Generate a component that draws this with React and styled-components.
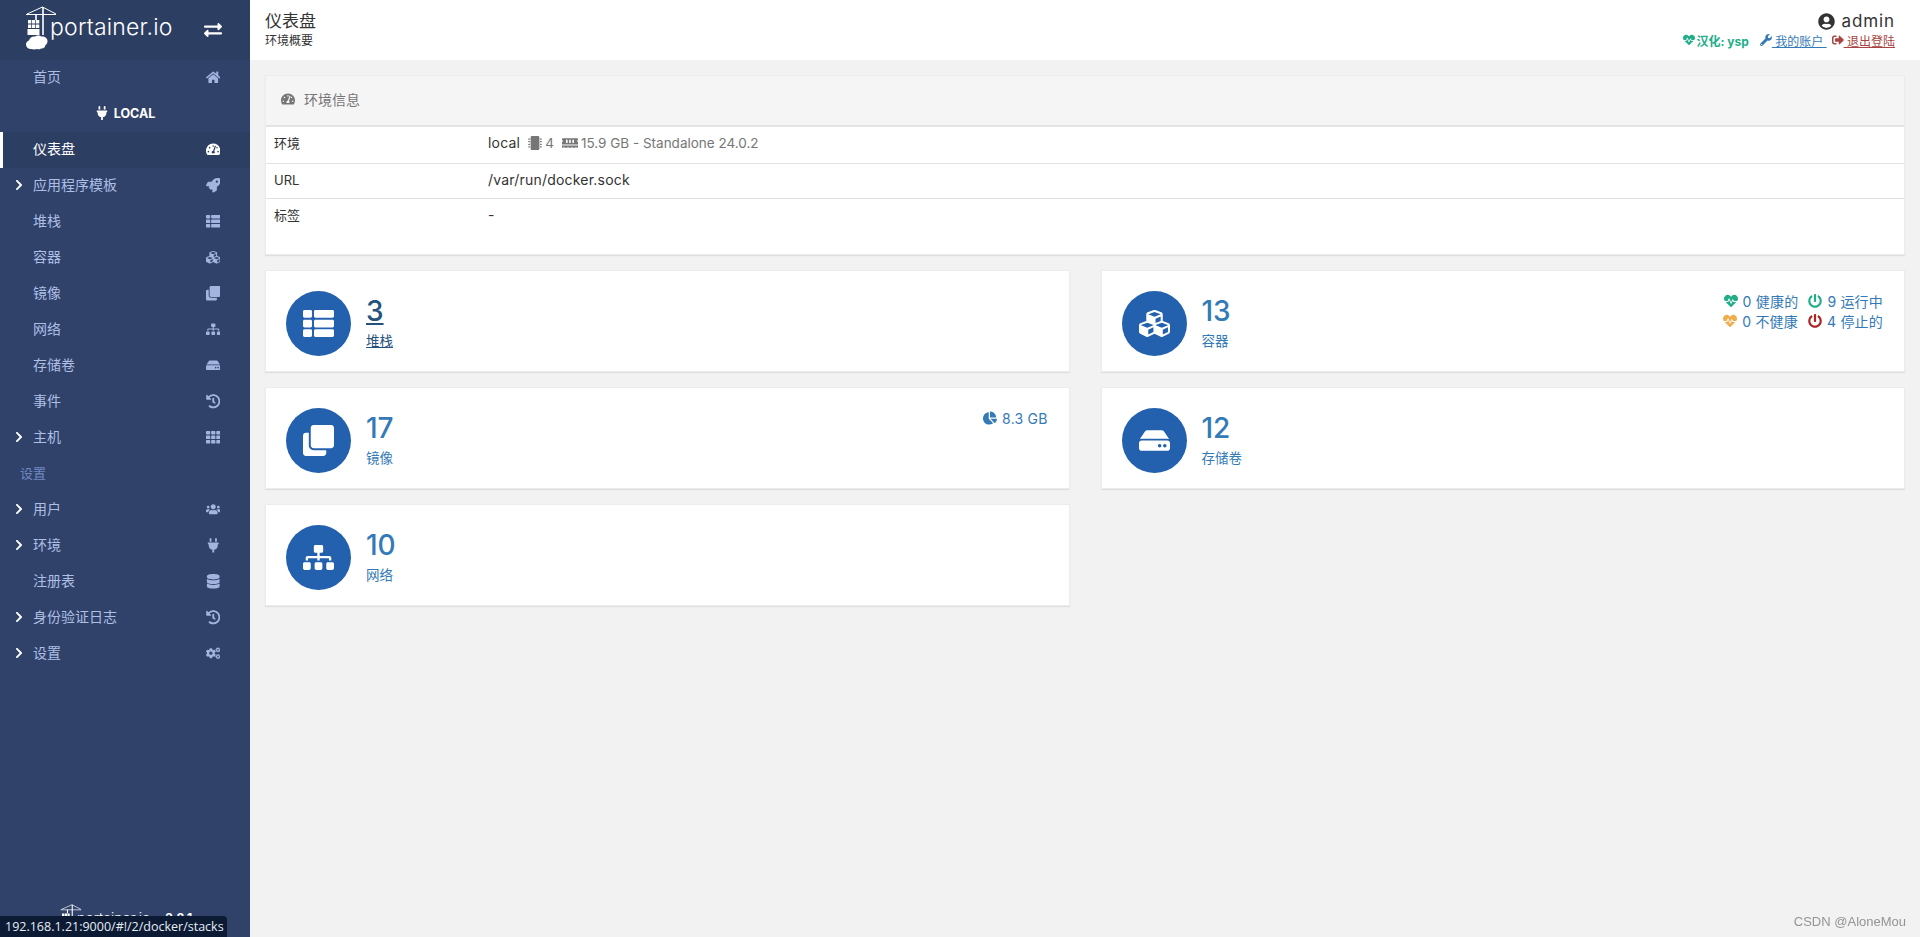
import React from 'react';
import styled, { createGlobalStyle, css } from 'styled-components';
import {
  FaHome, FaPlug, FaTachometerAlt, FaRocket, FaThList, FaCubes, FaClone, FaSitemap, FaHdd,
  FaHistory, FaTh, FaUsers, FaDatabase, FaCogs, FaExchangeAlt, FaChevronRight, FaUserCircle,
  FaHeartbeat, FaWrench, FaSignOutAlt, FaMicrochip, FaMemory, FaPowerOff, FaChartPie,
} from 'react-icons/fa';

const FONT = `Inter, "Noto Sans CJK SC", "Noto Sans", sans-serif`;

// react-icons squeezes wide glyphs into a 1em box, the icon font does not
const naturalIcon = css`
  svg {
    width: auto;
    height: 1em;
  }
`;

const GlobalStyle = createGlobalStyle`
  * { box-sizing: border-box; }
  html, body { margin: 0; height: 100%; }
  body {
    font-family: ${FONT};
    font-size: 13px;
    color: #333;
    background: #f2f2f2;
    overflow: hidden;
  }
`;

const Page = styled.div`
  display: flex;
  height: 100vh;
`;

/* sidebar */
const Sidebar = styled.aside`
  width: 250px;
  flex: none;
  display: flex;
  flex-direction: column;
  background: #30426a;
`;

const Brand = styled.div`
  height: 60px;
  display: flex;
  align-items: flex-start;
  padding: 6px 28px 0 25px;
  background: #2d3e63;
  color: #fff;
`;

const BrandText = styled.span`
  font-size: 23px;
  font-weight: 300;
  line-height: 36px;
  margin: 3px 0 0 0;
  letter-spacing: 0.2px;
`;

const BrandToggle = styled.span`
  display: flex;
  margin: 15px 0 0 auto;
  font-size: 18px;
  line-height: 1;
  stroke: currentColor;
  stroke-width: 24px;
`;

const Nav = styled.nav`
  display: flex;
  flex-direction: column;
`;

const NavRow = styled.a`
  height: 36px;
  display: flex;
  align-items: center;
  padding-left: ${({ $active }) => ($active ? '10px' : '13px')};
  padding-right: 27px;
  padding-bottom: 5px;
  font-size: 14px;
  text-decoration: none;
  color: ${({ $active }) => ($active ? '#fff' : '#aebfe4')};
  background: ${({ $active }) => ($active ? '#2d3e63' : 'transparent')};
  border-left: ${({ $active }) => ($active ? '3px solid #fff' : 'none')};
`;

const Chevron = styled.span`
  width: 20px;
  flex: none;
  display: flex;
  color: #fff;
  font-size: 12px;
  padding-top: 2px;
  ${naturalIcon}
`;

const NavIcon = styled.span`
  margin-left: auto;
  width: 20px;
  display: flex;
  justify-content: center;
  font-size: 14.5px;
  padding-top: 4px;
  color: ${({ $active }) => ($active ? '#fff' : '#a3b5de')};
  ${naturalIcon}
`;

const EndpointTitle = styled.div`
  height: 36px;
  display: flex;
  align-items: center;
  justify-content: center;
  gap: 5px;
  padding-bottom: 2px;
  color: #fff;
  font-size: 12.5px;
  font-weight: 700;
`;

const EndpointIcon = styled.span`
  display: flex;
  font-size: 14px;
  ${naturalIcon}
`;

const SectionTitle = styled.div`
  height: 36px;
  display: flex;
  align-items: center;
  padding: 0 0 4px 20px;
  font-size: 13px;
  color: #7089c2;
`;

const SidebarFooter = styled.div`
  margin-top: auto;
  height: 33px;
  display: flex;
  align-items: flex-start;
  padding-left: 60px;
  color: #fff;
`;

const FooterName = styled.span`
  font-weight: 300;
  font-size: 14px;
  line-height: 16px;
  margin-top: 6px;
`;

const FooterVersion = styled.span`
  font-weight: 700;
  font-size: 12px;
  line-height: 16px;
  margin: 6px 0 0 15px;
`;

/* main */
const Main = styled.main`
  flex: 1;
  min-width: 0;
  display: flex;
  flex-direction: column;
`;

const TopBar = styled.header`
  height: 60px;
  flex: none;
  display: flex;
  justify-content: space-between;
  padding: 0 25px 0 15px;
  background: #fff;
`;

const TitleBlock = styled.div`
  padding-top: 9px;
`;

const PageTitle = styled.div`
  font-size: 17px;
  line-height: 24px;
  color: #333;
`;

const PageSubtitle = styled.div`
  font-size: 12px;
  line-height: 16px;
  color: #333;
`;

const UserBlock = styled.div`
  display: flex;
  flex-direction: column;
  align-items: flex-end;
  padding-top: 11px;
`;

const UserName = styled.div`
  display: flex;
  align-items: center;
  gap: 6px;
  height: 20px;
  font-size: 17px;
  letter-spacing: 0.9px;
  color: #333;
`;

const UserLinks = styled.div`
  display: flex;
  align-items: center;
  height: 22px;
  margin-top: -2px;
  font-size: 12px;
`;

const Credit = styled.span`
  display: flex;
  align-items: center;
  gap: 1px;
  margin-right: 11px;
  font-weight: 700;
  color: #23ae89;
`;

const HeadLink = styled.a`
  display: flex;
  align-items: center;
  margin-left: ${({ $spaced }) => ($spaced ? '5px' : '0')};
  color: ${({ $color }) => $color};
  text-decoration: underline;
`;

const Content = styled.div`
  flex: 1;
  padding: 15px;
`;

const Widget = styled.section`
  background: #fff;
  border: 1px solid #ececec;
  box-shadow: 0 1px 1px rgba(0, 0, 0, 0.08);
  height: 180px;
  margin-bottom: 15px;
`;

const WidgetHead = styled.div`
  height: 51px;
  display: flex;
  align-items: center;
  gap: 9px;
  padding: 0 0 3px 15px;
  background: #f5f5f5;
  border-bottom: 2px solid #e4e4e4;
  font-size: 14px;
  color: #767676;
  ${naturalIcon}
`;

const InfoTable = styled.table`
  width: 100%;
  border-collapse: collapse;
`;

const LabelCell = styled.td`
  width: 214px;
  padding: 7px 8px 0;
  height: ${({ $h }) => $h}px;
  vertical-align: top;
  line-height: 18px;
  font-size: 13px;
  border-bottom: ${({ $last }) => ($last ? 'none' : '1px solid #e2e2e2')};
`;

const ValueCell = styled(LabelCell)`
  width: auto;
  font-size: 14px;
  letter-spacing: 0.2px;
`;

const Muted = styled.span`
  display: inline-flex;
  align-items: center;
  color: #767676;
  font-size: 13.5px;
  letter-spacing: 0;
  margin-left: ${({ $gap }) => $gap}px;
  gap: ${({ $inner }) => $inner}px;
  vertical-align: top;
`;

const StatGrid = styled.div`
  display: grid;
  grid-template-columns: 1fr 1fr;
  column-gap: 31px;
  row-gap: 15px;
`;

const StatCard = styled.div`
  height: 102px;
  display: flex;
  align-items: center;
  padding: 5px 21px 0 20px;
  background: #fff;
  border: 1px solid #ececec;
  box-shadow: 0 1px 1px rgba(0, 0, 0, 0.08);
`;

const StatCircle = styled.div`
  width: 65px;
  height: 65px;
  flex: none;
  display: flex;
  align-items: center;
  justify-content: center;
  border-radius: 50%;
  background: #2360ae;
  color: #fff;
  font-size: 31px;
  ${naturalIcon}
`;

const StatText = styled.a`
  display: block;
  margin: -2px 0 0 15px;
  color: ${({ $hover }) => ($hover ? '#23527c' : '#337ab7')};
  text-decoration: ${({ $hover }) => ($hover ? 'underline' : 'none')};
`;

const StatNumber = styled.div`
  font-size: 28px;
  font-weight: 500;
  line-height: 32px;
`;

const StatLabel = styled.div`
  font-size: 13.5px;
  line-height: 18px;
  margin-top: 5px;
`;

const StatExtra = styled.div`
  margin-left: auto;
  align-self: flex-start;
  padding-top: ${({ $top }) => $top}px;
  color: #337ab7;
  font-size: 14px;
`;

const ExtraRow = styled.div`
  display: flex;
  justify-content: flex-end;
  align-items: center;
  height: 20px;
`;

const ExtraItem = styled.span`
  display: inline-flex;
  align-items: center;
  gap: 5px;
  margin-left: 10px;
  letter-spacing: 0.2px;
`;

const ExtraIcon = styled.span`
  display: flex;
  color: ${({ $color }) => $color};
  font-size: 14px;
  ${naturalIcon}
`;

const StatusBubble = styled.div`
  position: fixed;
  left: 0;
  bottom: 0;
  width: 227px;
  height: 21px;
  display: flex;
  align-items: center;
  padding-left: 5px;
  background: #0c1a33;
  border-top-right-radius: 4px;
  color: #e6edf5;
  font-family: "Open Sans", sans-serif;
  font-size: 12.5px;
  white-space: nowrap;
`;

const Watermark = styled.div`
  position: fixed;
  right: 14px;
  bottom: 8px;
  color: #949494;
  font-family: "Liberation Sans", sans-serif;
  font-size: 13px;
`;

const LogoSvg = styled.svg`
  flex: none;
  display: block;
  overflow: visible;
`;

const Logo = ({ width, height }) => (
  <LogoSvg width={width} height={height} viewBox="24 5 25 44" fill="none">
    <path d="M25 13.500H55M41.500 6L26 13M41.500 6L55 13" stroke="#fff" strokeWidth="1" />
    <path d="M35 13V19M42 6V34" stroke="#fff" strokeWidth="1.600" />
    <path d="M27 19h3.300v3.500h-3.300zM31 19h3.300v3.500h-3.300zM35 19h3.300v3.500h-3.300zM27 23.500h3.300V27h-3.300zM31 23.500h3.300V27h-3.300zM35 23.500h3.300V27h-3.300zM26.500 28H38.500v6H26.500z" fill="#fff" />
    <path d="M30 48c-3 0-5-2-5-4.500 0-2 1.500-3.500 3-4 .5-2.500 3-4.500 6-4 1.500-1.500 5-1.500 6.500 0 3-.5 6 1.500 6 4.500 0 1.500-.5 3-2 4-.5 2.500-2 4-4.500 3.500-1 1-3 1-4 .5-2 .5-4 .5-6 0z" fill="#fff" />
  </LogoSvg>
);

const navTop = [
  { label: '仪表盘', icon: FaTachometerAlt, active: true },
  { label: '应用程序模板', icon: FaRocket, more: true },
  { label: '堆栈', icon: FaThList },
  { label: '容器', icon: FaCubes },
  { label: '镜像', icon: FaClone },
  { label: '网络', icon: FaSitemap },
  { label: '存储卷', icon: FaHdd },
  { label: '事件', icon: FaHistory },
  { label: '主机', icon: FaTh, more: true },
];

const navSettings = [
  { label: '用户', icon: FaUsers, more: true },
  { label: '环境', icon: FaPlug, more: true },
  { label: '注册表', icon: FaDatabase },
  { label: '身份验证日志', icon: FaHistory, more: true },
  { label: '设置', icon: FaCogs, more: true },
];

const NavItem = ({ label, icon: Icon, active, more }) => (
  <NavRow href="#" $active={active}>
    <Chevron>{more && <FaChevronRight />}</Chevron>
    {label}
    <NavIcon $active={active}><Icon /></NavIcon>
  </NavRow>
);

const Stat = ({ icon: Icon, value, label, hover, children }) => (
  <StatCard>
    <StatCircle><Icon /></StatCircle>
    <StatText href="#" $hover={hover}>
      <StatNumber>{value}</StatNumber>
      <StatLabel>{label}</StatLabel>
    </StatText>
    {children}
  </StatCard>
);

const App = () => (
  <Page>
    <GlobalStyle />
    <Sidebar>
      <Brand>
        <Logo width={25} height={44} />
        <BrandText>portainer.io</BrandText>
        <BrandToggle><FaExchangeAlt /></BrandToggle>
      </Brand>
      <Nav>
        <NavItem label="首页" icon={FaHome} />
        <EndpointTitle><EndpointIcon><FaPlug /></EndpointIcon> LOCAL</EndpointTitle>
        {navTop.map((item) => <NavItem key={item.label} {...item} />)}
        <SectionTitle>设置</SectionTitle>
        {navSettings.map((item) => <NavItem key={item.label} {...item} />)}
      </Nav>
      <SidebarFooter>
        <Logo width={17} height={30} />
        <FooterName>portainer.io</FooterName>
        <FooterVersion>2.8.1</FooterVersion>
      </SidebarFooter>
    </Sidebar>

    <Main>
      <TopBar>
        <TitleBlock>
          <PageTitle>仪表盘</PageTitle>
          <PageSubtitle>环境概要</PageSubtitle>
        </TitleBlock>
        <UserBlock>
          <UserName><FaUserCircle size={17} /> admin</UserName>
          <UserLinks>
            <Credit><FaHeartbeat size={12} />汉化: ysp</Credit>
            <HeadLink href="#" $color="#337ab7"><FaWrench size={12} />{'\u00a0我的账户\u00a0'}</HeadLink>
            <HeadLink href="#" $color="#a94442" $spaced><FaSignOutAlt size={12} />{'\u00a0退出登陆'}</HeadLink>
          </UserLinks>
        </UserBlock>
      </TopBar>

      <Content>
        <Widget>
          <WidgetHead><FaTachometerAlt size={14.5} /> 环境信息</WidgetHead>
          <InfoTable>
            <tbody>
              <tr>
                <LabelCell $h={36}>环境</LabelCell>
                <ValueCell $h={36}>
                  local
                  <Muted $gap={8} $inner={3}><FaMicrochip size={14} /> 4</Muted>
                  <Muted $gap={8} $inner={3}><FaMemory size={16} /> 15.9 GB - Standalone 24.0.2</Muted>
                </ValueCell>
              </tr>
              <tr>
                <LabelCell $h={35}>URL</LabelCell>
                <ValueCell $h={35}>/var/run/docker.sock</ValueCell>
              </tr>
              <tr>
                <LabelCell $h={56} $last>标签</LabelCell>
                <ValueCell $h={56} $last>-</ValueCell>
              </tr>
            </tbody>
          </InfoTable>
        </Widget>

        <StatGrid>
          <Stat icon={FaThList} value="3" label="堆栈" hover />
          <Stat icon={FaCubes} value="13" label="容器">
            <StatExtra $top={15}>
              <ExtraRow>
                <ExtraItem><ExtraIcon $color="#23ae89"><FaHeartbeat /></ExtraIcon>0 健康的</ExtraItem>
                <ExtraItem><ExtraIcon $color="#23ae89"><FaPowerOff /></ExtraIcon>9 运行中</ExtraItem>
              </ExtraRow>
              <ExtraRow>
                <ExtraItem><ExtraIcon $color="#f0ad4e"><FaHeartbeat /></ExtraIcon>0 不健康</ExtraItem>
                <ExtraItem><ExtraIcon $color="#ae2323"><FaPowerOff /></ExtraIcon>4 停止的</ExtraItem>
              </ExtraRow>
            </StatExtra>
          </Stat>
          <Stat icon={FaClone} value="17" label="镜像">
            <StatExtra $top={15}>
              <ExtraRow>
                <ExtraItem><ExtraIcon $color="#337ab7"><FaChartPie /></ExtraIcon>8.3 GB</ExtraItem>
              </ExtraRow>
            </StatExtra>
          </Stat>
          <Stat icon={FaHdd} value="12" label="存储卷" />
          <Stat icon={FaSitemap} value="10" label="网络" />
        </StatGrid>
      </Content>
    </Main>

    <StatusBubble>192.168.1.21:9000/#!/2/docker/stacks</StatusBubble>
    <Watermark>CSDN @AloneMou</Watermark>
  </Page>
);

export default App;
